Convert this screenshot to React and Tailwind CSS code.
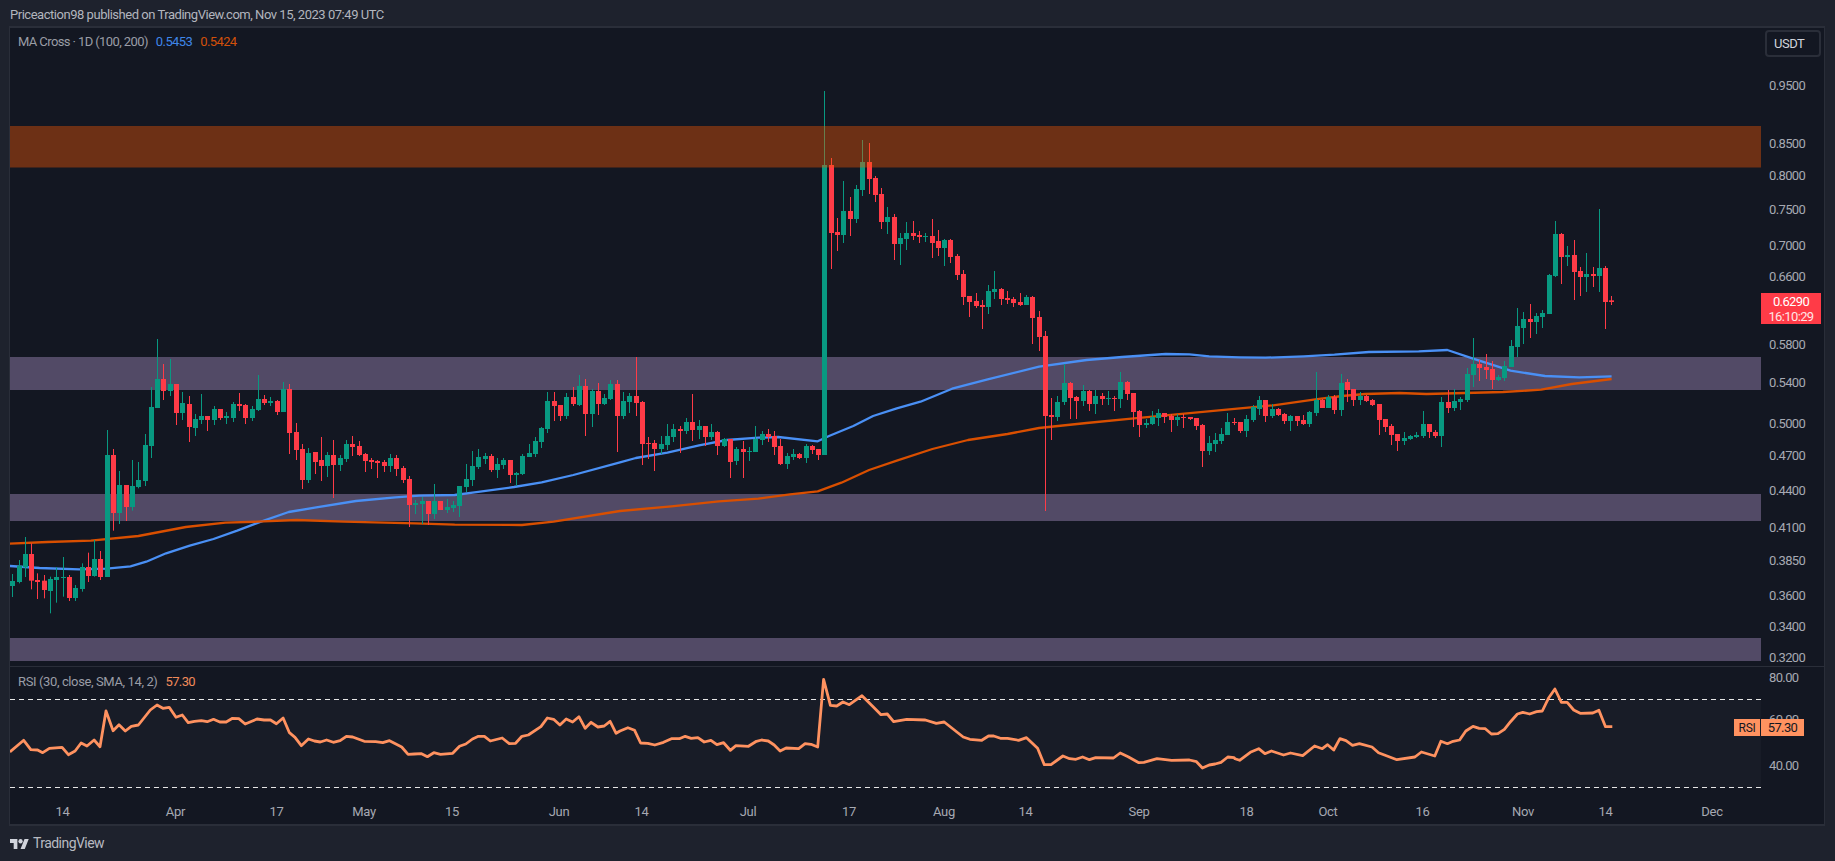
const UP = "#089981";
const DOWN = "#ff3b47";

const section = (base, rows) =>
  rows.map(([up, top, bottom, high, low]) => ({
    up,
    top: base + top / 3,
    bottom: base + bottom / 3,
    high: base + high / 3,
    low: base + low / 3,
  }));

/* ================= CANDLES: [up, bodyTop, bodyBottom, wickTop, wickBottom] ================= */
const candles = [
  ...section(300, [
    [1, 843, 858, 822, 891], [1, 797, 846, 780, 850], [1, 762, 802, 711, 831], [0, 762, 842, 730, 868],
    [0, 840, 846, 820, 897], [0, 842, 870, 825, 895], [1, 837, 873, 830, 940], [1, 831, 840, 802, 908],
    [1, 831, 834, 771, 890], [0, 831, 894, 825, 903], [1, 864, 894, 855, 903], [1, 801, 867, 790, 875],
    [0, 801, 828, 758, 846], [1, 777, 828, 720, 830], [0, 777, 831, 753, 840], [1, 465, 831, 390, 831],
    [0, 465, 639, 447, 692], [1, 555, 639, 513, 672], [0, 555, 621, 555, 663], [1, 558, 621, 480, 632],
    [1, 540, 561, 486, 565], [1, 435, 543, 402, 558], [1, 321, 438, 261, 474], [1, 237, 324, 117, 324],
    [0, 237, 273, 192, 300], [1, 252, 273, 177, 288], [0, 252, 339, 252, 375], [1, 309, 339, 276, 360],
    [0, 312, 381, 288, 426], [1, 357, 384, 342, 408], [1, 348, 360, 282, 372], [0, 348, 360, 348, 393],
    [1, 327, 360, 318, 375], [0, 327, 354, 327, 360], [1, 348, 354, 336, 372], [1, 312, 354, 306, 366],
    [0, 312, 318, 279, 333], [0, 315, 354, 312, 372], [1, 327, 354, 318, 363], [1, 297, 330, 225, 333],
    [0, 297, 309, 285, 315], [1, 303, 309, 291, 318], [0, 303, 336, 300, 345], [1, 267, 336, 246, 336],
    [0, 267, 399, 252, 462], [0, 396, 450, 369, 480], [0, 447, 540, 432, 567], [1, 459, 540, 444, 549],
    [0, 456, 486, 456, 522], [0, 480, 498, 411, 543], [1, 465, 498, 456, 531], [0, 465, 495, 420, 594],
    [1, 474, 495, 465, 513], [1, 432, 477, 420, 486], [0, 432, 441, 408, 468], [0, 438, 465, 423, 468],
    [0, 462, 483, 459, 516], [0, 480, 486, 474, 507], [0, 483, 489, 480, 534], [0, 486, 498, 480, 516],
    [1, 474, 498, 462, 516], [0, 474, 507, 465, 528], [0, 504, 540, 498, 549], [0, 537, 615, 528, 681],
    [1, 609, 615, 600, 642], [1, 603, 612, 591, 672], [0, 603, 642, 603, 675], [1, 603, 642, 552, 657],
    [0, 603, 630, 603, 630], [1, 621, 630, 597, 639], [1, 615, 624, 603, 636], [1, 558, 618, 558, 651],
    [1, 537, 561, 492, 576], [1, 498, 540, 453, 558], [1, 471, 501, 447, 507], [1, 468, 477, 459, 492],
    [0, 468, 510, 462, 516], [1, 492, 510, 474, 534], [1, 480, 495, 474, 507], [0, 480, 525, 480, 549],
    [1, 519, 525, 516, 558], [1, 468, 522, 462, 525], [1, 459, 471, 432, 471], [1, 423, 462, 411, 471],
    [1, 384, 426, 381, 444], [1, 303, 387, 276, 399], [0, 303, 318, 276, 363], [0, 315, 348, 315, 363],
    [1, 291, 348, 279, 357], [0, 291, 312, 261, 318], [1, 258, 315, 225, 318], [0, 258, 342, 237, 408],
    [1, 273, 342, 267, 381], [0, 273, 312, 249, 345], [1, 294, 312, 282, 315], [1, 252, 297, 240, 300],
    [0, 252, 348, 240, 456], [1, 303, 348, 276, 357], [1, 288, 306, 279, 339], [0, 288, 309, 171, 348],
    [0, 306, 432, 303, 495], [0, 429, 432, 411, 477], [0, 429, 447, 420, 513], [1, 432, 447, 408, 462],
    [1, 408, 435, 372, 450], [1, 387, 411, 372, 426], [0, 387, 393, 378, 459], [1, 366, 393, 354, 402],
    [0, 366, 390, 282, 423], [1, 378, 390, 360, 417], [0, 378, 411, 378, 438], [1, 396, 411, 372, 420],
    [0, 396, 438, 393, 465], [1, 417, 438, 414, 441], [0, 417, 486, 417, 534], [1, 447, 483, 441, 495],
    [0, 447, 456, 423, 534], [1, 453, 456, 441, 483], [1, 417, 456, 378, 456], [1, 402, 420, 393, 435],
    [0, 402, 411, 387, 426], [0, 408, 441, 393, 465], [0, 438, 492, 417, 495], [1, 468, 492, 459, 507],
    [1, 462, 471, 447, 480], [0, 462, 474, 459, 477], [1, 438, 474, 432, 489], [0, 438, 450, 435, 462],
    [0, 447, 465, 447, 480], [1, -405, 465, -627, 465],
  ]),
  ...section(60, [
    [0, 315, 519, 294, 627], [0, 516, 525, 474, 573], [1, 453, 525, 363, 549], [0, 453, 477, 411, 528],
    [1, 387, 477, 375, 489], [1, 306, 390, 240, 408], [0, 306, 357, 249, 402], [0, 354, 405, 348, 426],
    [0, 402, 486, 384, 507], [1, 471, 486, 441, 522], [0, 471, 552, 462, 600], [1, 534, 552, 519, 615],
    [1, 519, 537, 486, 570], [0, 519, 528, 483, 540], [0, 525, 531, 513, 549], [1, 528, 531, 519, 546],
    [0, 528, 549, 477, 594], [0, 543, 564, 510, 588], [1, 540, 564, 537, 618], [0, 540, 591, 537, 609],
    [0, 588, 645, 582, 660], [0, 642, 711, 630, 735], [0, 708, 726, 708, 771], [0, 723, 738, 699, 744],
    [0, 735, 741, 720, 807], [1, 693, 741, 675, 762], [1, 687, 696, 633, 717], [0, 687, 717, 684, 735],
    [0, 714, 720, 693, 732], [0, 717, 729, 711, 741], [0, 726, 735, 699, 738], [1, 711, 735, 705, 735],
    [0, 711, 774, 708, 852], [0, 771, 831, 753, 873], [0, 828, 1068, 813, 1353],
  ]),
  ...section(300, [
    [0, 345, 351, 294, 420], [1, 306, 351, 288, 363], [1, 249, 306, 192, 315], [0, 249, 294, 246, 357],
    [0, 291, 303, 288, 357], [1, 273, 303, 255, 318], [0, 273, 312, 270, 333], [1, 288, 312, 270, 342],
    [0, 288, 297, 279, 315], [1, 294, 297, 273, 315], [0, 294, 297, 288, 333], [1, 246, 297, 216, 324],
    [0, 246, 282, 243, 300], [0, 279, 336, 279, 381], [0, 333, 375, 330, 411], [1, 369, 375, 357, 384],
    [1, 351, 372, 333, 375], [1, 339, 354, 327, 378], [0, 339, 351, 339, 369], [0, 348, 360, 342, 396],
    [1, 351, 360, 342, 378], [0, 351, 354, 342, 384], [0, 351, 357, 351, 360], [0, 354, 378, 354, 390],
    [0, 375, 453, 372, 501], [1, 429, 453, 408, 465], [1, 420, 432, 399, 456], [1, 402, 423, 384, 432],
    [1, 366, 405, 339, 405], [0, 366, 369, 354, 375], [0, 366, 393, 366, 399], [1, 357, 393, 345, 411],
    [1, 321, 360, 315, 366], [1, 300, 327, 288, 345], [0, 300, 348, 300, 366], [1, 327, 348, 312, 354],
    [0, 327, 345, 324, 348], [0, 342, 363, 339, 372], [1, 348, 363, 345, 393], [0, 348, 363, 348, 378],
    [0, 360, 372, 345, 375], [1, 336, 372, 333, 381], [1, 300, 339, 216, 348], [0, 300, 324, 297, 324],
    [1, 291, 324, 285, 324], [0, 291, 330, 285, 342], [1, 249, 330, 222, 348], [0, 246, 270, 237, 306],
    [0, 267, 300, 267, 318], [1, 288, 300, 276, 315], [0, 288, 303, 285, 306], [0, 300, 315, 297, 318],
    [0, 312, 360, 312, 405], [0, 357, 381, 357, 396], [0, 378, 405, 372, 435], [0, 402, 423, 402, 453],
    [1, 414, 423, 396, 435], [1, 408, 417, 405, 420], [1, 405, 411, 396, 414], [1, 372, 408, 333, 414],
    [0, 372, 396, 372, 414], [0, 396, 408, 390, 414], [1, 306, 408, 291, 441], [0, 306, 324, 270, 339],
    [1, 303, 324, 267, 333], [1, 297, 306, 291, 330], [1, 222, 300, 204, 306], [1, 192, 225, 114, 261],
    [0, 192, 204, 180, 243], [0, 201, 210, 162, 237], [0, 207, 240, 183, 267], [1, 231, 240, 225, 243],
    [1, 198, 234, 183, 243], [1, 138, 201, 120, 180], [1, 78, 141, 24, 171], [1, 57, 84, 36, 132],
    [0, 57, 66, 12, 114], [1, 48, 66, 39, 102], [1, 39, 51, 30, 84],
  ]),
  ...section(0, [
    [1, 825, 942, 822, 942], [1, 702, 828, 663, 831], [0, 702, 771, 699, 852], [1, 765, 771, 738, 798],
    [0, 765, 816, 720, 900], [0, 813, 831, 801, 888], [1, 822, 831, 759, 876], [0, 822, 828, 801, 861],
    [1, 804, 828, 627, 876], [0, 804, 906, 798, 987], [0, 901, 906, 888, 915],
  ]),
];

/* ================= LINES ================= */
const trace = (xStart, xScale, base, pts) =>
  pts.map(([x, y]) => `${(xStart + x / xScale).toFixed(1)},${(base + y / 3).toFixed(1)}`).join(" ");

const L = 2.529;
const R = 2.613;

const blueLine = [
  trace(0, L, 300, [[25,798],[100,804],[200,808],[270,806],[330,799],[370,785],[420,760],[480,737],[540,717],[600,692],[660,665],[730,636],[800,622],[900,603],[1000,592],[1060,587],[1150,585],[1200,577],[1300,561],[1370,547],[1450,525],[1568,487]]),
  trace(620, L, 300, [[40,474],[120,458],[200,436],[270,420],[350,413],[400,411],[500,424],[530,407],[590,378],[640,348],[700,325],[760,305],[840,266],[930,238],[1060,200],[1180,180],[1270,171],[1380,162],[1440,163],[1490,169],[1568,172]]),
  trace(1235, R, 300, [[80,173],[180,169],[260,164],[350,156],[480,154],[555,150],[620,175],[720,212],[810,228],[900,232],[984,229]]),
].join(" ");

const orangeLine = [
  trace(0, L, 300, [[25,731],[120,726],[230,722],[350,708],[470,681],[570,668],[650,665],[750,660],[870,665],[1050,670],[1150,674],[1320,675],[1400,665],[1568,633]]),
  trace(620, L, 300, [[130,619],[250,604],[350,596],[430,583],[500,574],[560,548],[630,510],[700,482],[790,447],[880,420],[980,402],[1060,384],[1180,369],[1300,355],[1568,325]]),
  trace(1235, R, 300, [[100,316],[210,298],[280,288],[340,282],[430,279],[500,282],[600,279],[700,276],[800,269],[880,252],[984,237]]),
].join(" ");

const rsiLine = [
  trace(0, L, 600, [[25,456],[60,421],[78,449],[95,450],[108,458],[125,445],[157,442],[173,464],[190,453],[205,429],[220,438],[238,420],[253,440],[268,333],[286,392],[301,374],[317,393],[332,379],[350,375],[380,330],[397,315],[412,325],[428,322],[445,352],[461,345],[476,368],[492,364],[509,362],[524,365],[540,358],[556,366],[572,366],[588,355],[604,356],[620,372],[650,357],[668,360],[684,360],[699,371],[716,354],[732,398],[746,412],[762,437],[780,417],[795,423],[810,426],[826,420],[843,427],[860,422],[876,409],[892,411],[921,424],[950,425],[968,428],[985,422],[1000,431],[1016,441],[1032,463],[1048,462],[1066,461],[1081,470],[1097,458],[1114,463],[1145,460],[1162,439],[1178,432],[1195,417],[1210,409],[1225,409],[1240,423],[1270,414],[1288,431],[1304,430],[1320,409],[1336,405],[1368,380],[1384,354],[1400,358],[1416,375],[1432,357],[1448,366],[1464,350],[1480,385],[1495,367],[1512,381],[1528,378],[1543,364],[1558,400]]),
  trace(620, L, 600, [[0,393],[20,383],[37,391],[52,429],[70,430],[88,435],[110,427],[130,416],[150,416],[165,409],[180,415],[197,413],[213,426],[230,421],[245,434],[262,428],[279,451],[293,437],[325,439],[345,424],[358,420],[375,423],[390,435],[405,453],[420,444],[452,446],[468,431],[483,433],[500,441],[515,238],[532,316],[548,318],[564,306],[580,314],[612,287],[640,320],[660,344],[676,342],[692,365],[725,358],[772,360],[800,370],[820,366],[868,411],[885,418],[915,421],[932,408],[945,408],[962,415],[980,415],[1008,421],[1028,413],[1056,445],[1073,494],[1090,494],[1120,468],[1137,476],[1153,478],[1170,471],[1187,479],[1203,473],[1248,474],[1265,459],[1285,470],[1312,488],[1325,487],[1358,476],[1395,481],[1440,480],[1458,485],[1473,504],[1490,495],[1505,492],[1520,487],[1537,471],[1553,473]]),
  trace(1235, R, 600, [[0,476],[12,481],[40,457],[62,446],[78,461],[95,453],[127,465],[145,459],[177,467],[208,438],[228,446],[242,434],[258,450],[274,416],[290,422],[307,436],[325,431],[358,441],[375,458],[423,479],[470,471],[487,456],[522,468],[538,424],[555,431],[570,424],[587,420],[603,393],[622,379],[638,385],[654,386],[670,402],[687,401],[704,388],[720,365],[738,342],[752,337],[770,342],[788,335],[803,333],[820,293],[836,267],[853,307],[868,307],[885,330],[902,340],[935,339],[951,331],[968,380],[986,380]]),
].join(" ");

const priceTicks = [
  ["0.9500", 85], ["0.8500", 143], ["0.8000", 175], ["0.7500", 209], ["0.7000", 245], ["0.6600", 276],
  ["0.5800", 344], ["0.5400", 382], ["0.5000", 423], ["0.4700", 455], ["0.4400", 490], ["0.4100", 527],
  ["0.3850", 560], ["0.3600", 595], ["0.3400", 626], ["0.3200", 657],
];

const timeTicks = [
  ["14", 62.5], ["Apr", 175.5], ["17", 276.5], ["May", 364], ["15", 452], ["Jun", 559], ["14", 641.5], ["Jul", 748],
  ["17", 849], ["Aug", 944], ["14", 1025.5], ["Sep", 1139], ["18", 1246.5], ["Oct", 1328], ["16", 1422.5],
  ["Nov", 1523], ["14", 1605.5], ["Dec", 1712],
];

function Candles() {
  return candles.map((c, i) => {
    const x = Math.round(12.3 + 6.296 * i);
    const fill = c.up ? UP : DOWN;
    return (
      <g key={i} fill={fill}>
        <rect x={x} y={c.high} width="1" height={c.low - c.high} />
        <rect x={x - 2} y={c.top} width="5" height={Math.max(c.bottom - c.top, 1)} />
      </g>
    );
  });
}

export default function App() {
  return (
    <div className="h-[861px] w-full flex flex-col overflow-hidden bg-[#1e222d] text-[#b2b5be] font-['Roboto',sans-serif] text-[13px]">
      <div className="h-[26px] flex items-center pl-[10px] pt-[4px] tracking-[-0.47px]">
        Priceaction98 published on TradingView.com, Nov 15, 2023 07:49 UTC
      </div>

      <div className="ml-[9px] w-[1816px] h-[800px] flex flex-col bg-[#131722] border-t-2 border-b-2 border-l border-r border-[#2a2e39]">
        {/* MAIN PANE */}
        <div className="h-[638px] flex">
          <div className="relative w-[1751px]">
            <svg width="1751" height="638" viewBox="10 28 1751 638" className="block">
              <rect x="10" y="357" width="1751" height="33" fill="#524a66" />
              <rect x="10" y="494" width="1751" height="27" fill="#524a66" />
              <rect x="10" y="638" width="1751" height="23" fill="#524a66" />
              <polyline points={blueLine} fill="none" stroke="#4a90f5" strokeWidth="2.3" strokeLinejoin="round" />
              <polyline points={orangeLine} fill="none" stroke="#d94f00" strokeWidth="2.3" strokeLinejoin="round" />
              <Candles />
              <rect x="10" y="126" width="1751" height="41.5" fill="#f65802" fillOpacity="0.4" />
            </svg>
            <div className="absolute left-[8px] top-[4px] flex gap-[8px] text-[#9a9da6] tracking-[-0.6px]">
              <span>MA Cross · 1D (100, 200)</span>
              <span className="text-[#3f86e8]">0.5453</span>
              <span className="text-[#d2500a]">0.5424</span>
            </div>
          </div>
          <div className="relative flex-1">
            <svg width="63" height="638" viewBox="1761 28 63 638" className="block fill-[#a6a9b2] tracking-[-0.63px]">
              {priceTicks.map(([label, y]) => (
                <text key={label} x="1769" y={y} dominantBaseline="central">{label}</text>
              ))}
            </svg>
            <div className="absolute left-[4px] top-[2px] w-[56px] h-[27px] flex items-center pl-[7px] rounded-[4px] border-2 border-[#2a2e39] text-[#d1d4dc] tracking-[-0.5px]">
              USDT
            </div>
            <div className="absolute left-0 top-[265px] w-[60px] h-[31px] flex flex-col items-center justify-center bg-[#ff3b47] text-white leading-[15px] tracking-[-0.63px]">
              <span>0.6290</span>
              <span className="text-[#ffe4e6]">16:10:29</span>
            </div>
          </div>
        </div>

        {/* RSI PANE */}
        <div className="h-[129px] flex border-t border-[#2a2e39]">
          <div className="relative w-[1751px]">
            <svg width="1751" height="128" viewBox="10 667 1751 128" className="block">
              <rect x="10" y="699" width="1751" height="89" fill="#181c27" />
              <line x1="10" y1="699.5" x2="1761" y2="699.5" stroke="#e6e6e6" strokeDasharray="5 4" />
              <line x1="10" y1="787.5" x2="1761" y2="787.5" stroke="#e6e6e6" strokeDasharray="5 4" />
              <polyline points={rsiLine} fill="none" stroke="#ff9260" strokeWidth="2.8" strokeLinejoin="round" />
            </svg>
            <div className="absolute left-[8px] top-[5px] flex gap-[8px] text-[#9a9da6] tracking-[-0.38px]">
              <span>RSI (30, close, SMA, 14, 2)</span>
              <span className="text-[#f08a5a] tracking-[-0.63px]">57.30</span>
            </div>
            <div className="absolute right-[1px] top-[52px] h-[17px] w-[26px] flex items-center justify-center bg-[#ff9260] text-[#131722] text-[12px] tracking-[-0.3px]">
              RSI
            </div>
          </div>
          <div className="relative flex-1">
            <svg width="63" height="128" viewBox="1761 667 63 128" className="block fill-[#a6a9b2] tracking-[-0.63px]">
              <text x="1769" y="677" dominantBaseline="central">80.00</text>
              <text x="1769" y="719" dominantBaseline="central">60.00</text>
              <text x="1769" y="765" dominantBaseline="central">40.00</text>
            </svg>
            <div className="absolute left-0 top-[52px] h-[17px] w-[43px] flex items-center justify-center bg-[#ff9260] text-[#131722] tracking-[-0.63px]">
              57.30
            </div>
          </div>
        </div>

        {/* TIME AXIS */}
        <svg width="1814" height="28" viewBox="10 796 1814 28" className="block fill-[#a6a9b2] tracking-[-0.3px]">
          {timeTicks.map(([label, x], i) => (
            <text key={i} x={x} y="812" textAnchor="middle" dominantBaseline="central">{label}</text>
          ))}
        </svg>
      </div>

      <div className="flex-1 flex items-center gap-[4px] pl-[10px] text-[14px] tracking-[-0.55px] text-[#b8bac1]">
        <svg width="19" height="10" viewBox="0 4 36 18" className="fill-[#d1d4dc]" preserveAspectRatio="none">
          <path d="M14 22H7V11H0V4h14v18zM28 22h-8l7.5-18h8L28 22z" />
          <circle cx="20" cy="8" r="4" />
        </svg>
        <span>TradingView</span>
      </div>
    </div>
  );
}
